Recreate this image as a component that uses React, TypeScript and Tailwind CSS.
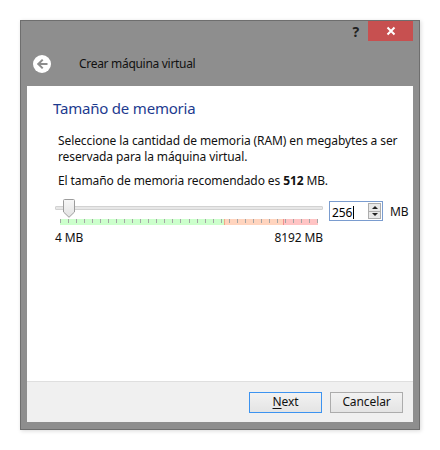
// Asistente "Crear máquina virtual": paso de tamaño de memoria.
import { useState } from 'react';

const TICKS = Array.from({ length: 33 }, (_, i) => i);

function BackIcon() {
  return (
    <svg width="20" height="20" viewBox="0 0 20 20">
      <circle cx="10" cy="10" r="9" fill="#ffffff" />
      <path
        d="M14.5 10H6.5M10 6.3L6.3 10L10 13.7"
        stroke="#8d8d8d"
        strokeWidth="2"
        fill="none"
        strokeLinecap="square"
      />
    </svg>
  );
}

function MemorySlider() {
  return (
    <div className="relative w-[270px]">
      {/* pista */}
      <div className="mt-[8px] h-[4px] w-[268px] rounded-[1px] border border-[#d2d2d2] bg-[#e7e7e7]" />
      {/* escala coloreada */}
      <div className="ml-[5px] mt-[9px] flex h-[6px] w-[258px]">
        <div className="h-full w-[164px] bg-[#ccffcc]" />
        <div className="h-full w-[59px] border-l border-[#f0a88a] bg-[#ffd4be]" />
        <div className="h-full w-[35px] border-l border-[#f28f8f] bg-[#ffc4c4]" />
      </div>
      <div className="absolute left-[5px] top-[21px] flex w-[258px] justify-between">
        {TICKS.map((t) => (
          <div key={t} className="h-[4px] w-px bg-[#a5a5a5]" />
        ))}
      </div>
      {/* cursor */}
      <svg className="absolute left-[8px] top-[1px]" width="12" height="19" viewBox="0 0 12 19">
        <defs>
          <linearGradient id="thumb" x1="0" y1="0" x2="0" y2="1">
            <stop offset="0" stopColor="#f7f7f7" />
            <stop offset="1" stopColor="#e2e2e2" />
          </linearGradient>
        </defs>
        <path d="M0.5 1.5Q0.5 0.5 1.5 0.5H10.5Q11.5 0.5 11.5 1.5V13L6 18.3L0.5 13Z" fill="url(#thumb)" stroke="#9c9c9c" />
      </svg>
    </div>
  );
}

function SpinBox() {
  const [value] = useState('256');
  return (
    <div className="flex h-[20px] w-[54px] items-center border border-[#7a9ccf] bg-white pl-[2px] pr-[1px]">
      <span className="flex-1 leading-none text-[#000]">
        {value}
        <span className="ml-px inline-block h-[13px] w-px translate-y-[2px] bg-black" />
      </span>
      <div className="flex h-[16px] w-[13px] flex-col border border-[#adadad] bg-[#e8e8e8]">
        <div className="flex flex-1 items-center justify-center border-b border-[#adadad]">
          <div className="h-0 w-0 border-x-[3px] border-b-[3px] border-x-transparent border-b-[#222]" />
        </div>
        <div className="flex flex-1 items-center justify-center">
          <div className="h-0 w-0 border-x-[3px] border-t-[3px] border-x-transparent border-t-[#222]" />
        </div>
      </div>
    </div>
  );
}

export default function App() {
  return (
    <div className="h-[450px] w-[440px] bg-white pl-[20px] pt-[20px] text-[12px] tracking-[-0.1px] text-[#111] [font-family:'Noto_Sans',sans-serif]">
      <div className="flex h-[410px] w-[400px] flex-col border border-[#6e6e6e] bg-[#8e8e8e] px-[6px] pb-[7px] shadow-[1px_1px_4px_rgba(0,0,0,0.15)]">
        {/* barra de título */}
        <div className="flex h-[20px] items-stretch justify-end">
          <span className="mr-[9px] mt-[4px] text-[14px] font-bold leading-none text-[#222]">?</span>
          <button className="flex w-[45px] items-center justify-center bg-[#c75050] text-white">
            <svg width="10" height="10" viewBox="0 0 10 10">
              <path d="M1.5 1.5L8.5 8.5M8.5 1.5L1.5 8.5" stroke="#fff" strokeWidth="2" />
            </svg>
          </button>
        </div>

        {/* cabecera */}
        <div className="flex h-[45px] items-center pl-[5px]">
          <BackIcon />
          <span className="ml-[27px] text-[12px] tracking-[-0.3px] text-[#111]">Crear máquina virtual</span>
        </div>

        {/* contenido */}
        <div className="flex flex-1 flex-col bg-white">
          <div className="flex-1 pl-[26px] pt-[11px]">
            <h1 className="text-[15px] leading-[22px] tracking-[-0.2px] text-[#1d3b8f]">Tamaño de memoria</h1>
            <p className="ml-[5px] mt-[14px] leading-[16px]">
              Seleccione la cantidad de memoria (RAM) en megabytes a ser
              <br />
              reservada para la máquina virtual.
            </p>
            <p className="ml-[5px] mt-[8px] leading-[16px]">
              El tamaño de memoria recomendado es <b>512</b> MB.
            </p>
            <div className="ml-[2px] mt-[9px] flex items-start">
              <div className="flex flex-col">
                <MemorySlider />
                <div className="mt-[5px] flex w-[268px] justify-between leading-[16px]">
                  <span>4 MB</span>
                  <span>8192 MB</span>
                </div>
              </div>
              <div className="ml-[4px] mt-[3px]">
                <SpinBox />
              </div>
              <span className="ml-[7px] mt-[7px] leading-[14px]">MB</span>
            </div>
          </div>

          {/* botones */}
          <div className="flex h-[41px] items-center justify-end gap-[8px] border-t border-[#dfdfdf] bg-[#f0f0f0] pr-[10px]">
            <button className="h-[21px] w-[73px] border border-[#3c93f0] bg-gradient-to-b from-[#f2f2f2] to-[#e4e4e4] leading-none text-[#111]">
              <span className="underline underline-offset-2">N</span>ext
            </button>
            <button className="h-[21px] w-[73px] border border-[#acacac] bg-gradient-to-b from-[#f2f2f2] to-[#e4e4e4] leading-none text-[#111]">
              Cancelar
            </button>
          </div>
        </div>
      </div>
    </div>
  );
}
